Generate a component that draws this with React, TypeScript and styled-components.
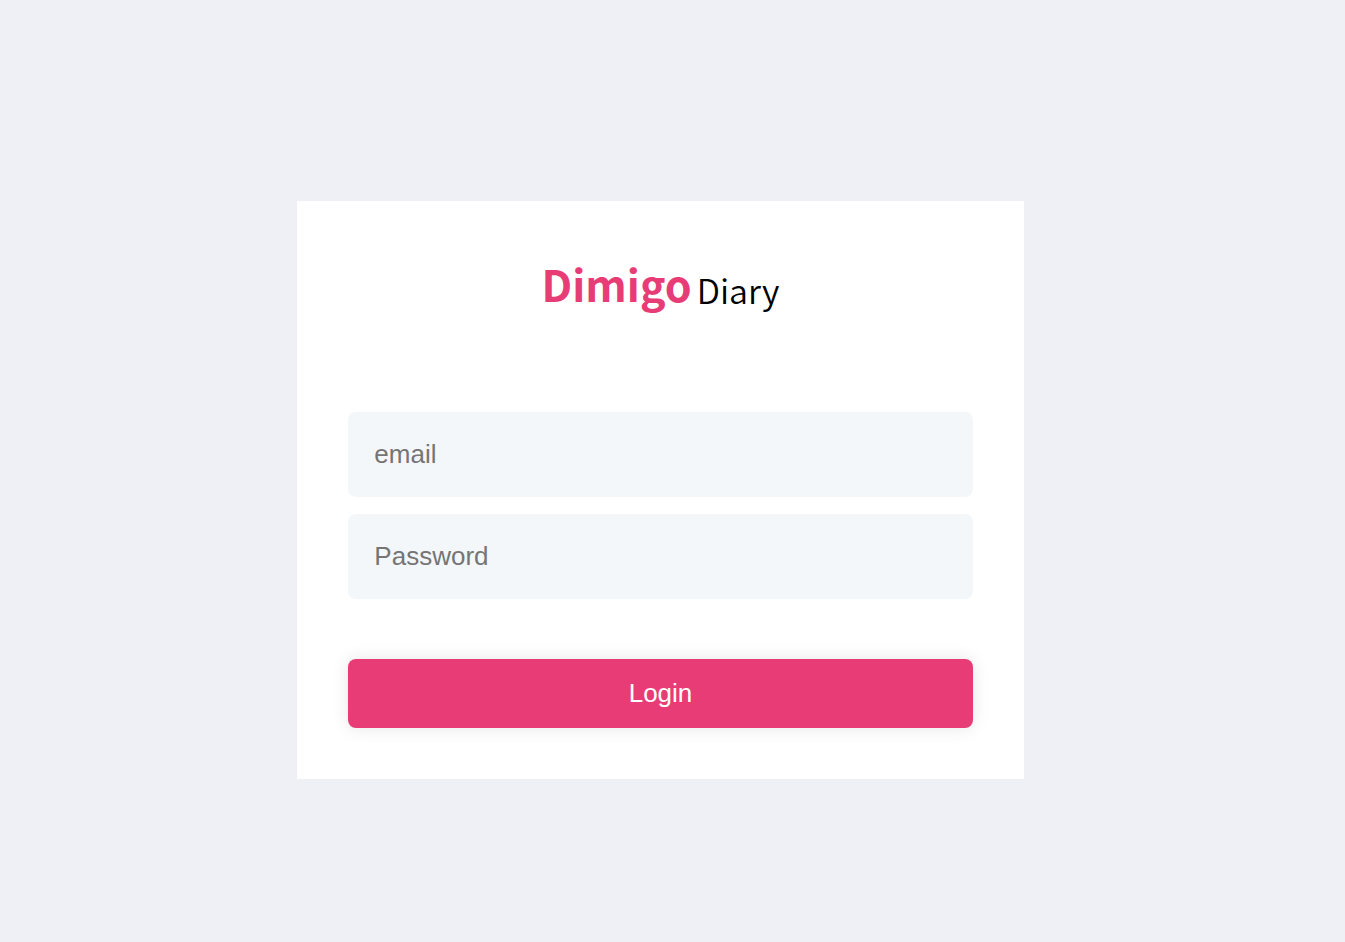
import React from "react";
import styled, { createGlobalStyle } from "styled-components";

const GlobalStyle = createGlobalStyle`
  *, *::before, *::after { box-sizing: border-box; }
  body {
    margin: 0;
    background: #eff0f6;
    font-family: "Noto Sans CJK KR", sans-serif;
  }
`;

const Page = styled.main`
  display: flex;
  align-items: center;
  justify-content: center;
  min-height: 100vh;
  padding: 38px 24px 0 0;
`;

const Card = styled.form`
  display: flex;
  flex-direction: column;
  width: 54vw;
  padding: 51px;
  background: #fff;
`;

const Title = styled.h1`
  display: flex;
  align-items: flex-end;
  justify-content: center;
  gap: 5px;
  margin: 0 0 98px;
  padding: 5px 0;
  font-size: 34px;
  font-weight: 350;
  line-height: 39px;
  color: #000;
`;

const Brand = styled.strong`
  font-size: 43px;
  font-weight: 700;
  line-height: 52px;
  color: #e83c76;
`;

const Field = styled.input`
  width: 100%;
  height: 85px;
  margin-bottom: 17px;
  padding: 0 26px;
  border: 0;
  border-radius: 8px;
  background: #f3f7fa;
  font-family: "Liberation Sans", Arial, sans-serif;
  font-size: 26px;

  &::placeholder { color: #757575; opacity: 1; }
`;

const LoginButton = styled.button`
  height: 69px;
  margin-top: 43px;
  border: 0;
  border-radius: 8px;
  background: #e83c76;
  box-shadow: 0 0 17px rgba(0, 0, 0, 0.1);
  font-family: "Liberation Sans", Arial, sans-serif;
  font-size: 26px;
  color: #fff;
  cursor: pointer;
`;

export default function App() {
  return (
    <>
      <GlobalStyle />
      <Page>
        <Card onSubmit={(event) => event.preventDefault()}>
          <Title>
            <Brand>Dimigo</Brand>
            <span>Diary</span>
          </Title>
          <Field type="email" placeholder="email" aria-label="email" />
          <Field type="password" placeholder="Password" aria-label="Password" />
          <LoginButton type="submit">Login</LoginButton>
        </Card>
      </Page>
    </>
  );
}
